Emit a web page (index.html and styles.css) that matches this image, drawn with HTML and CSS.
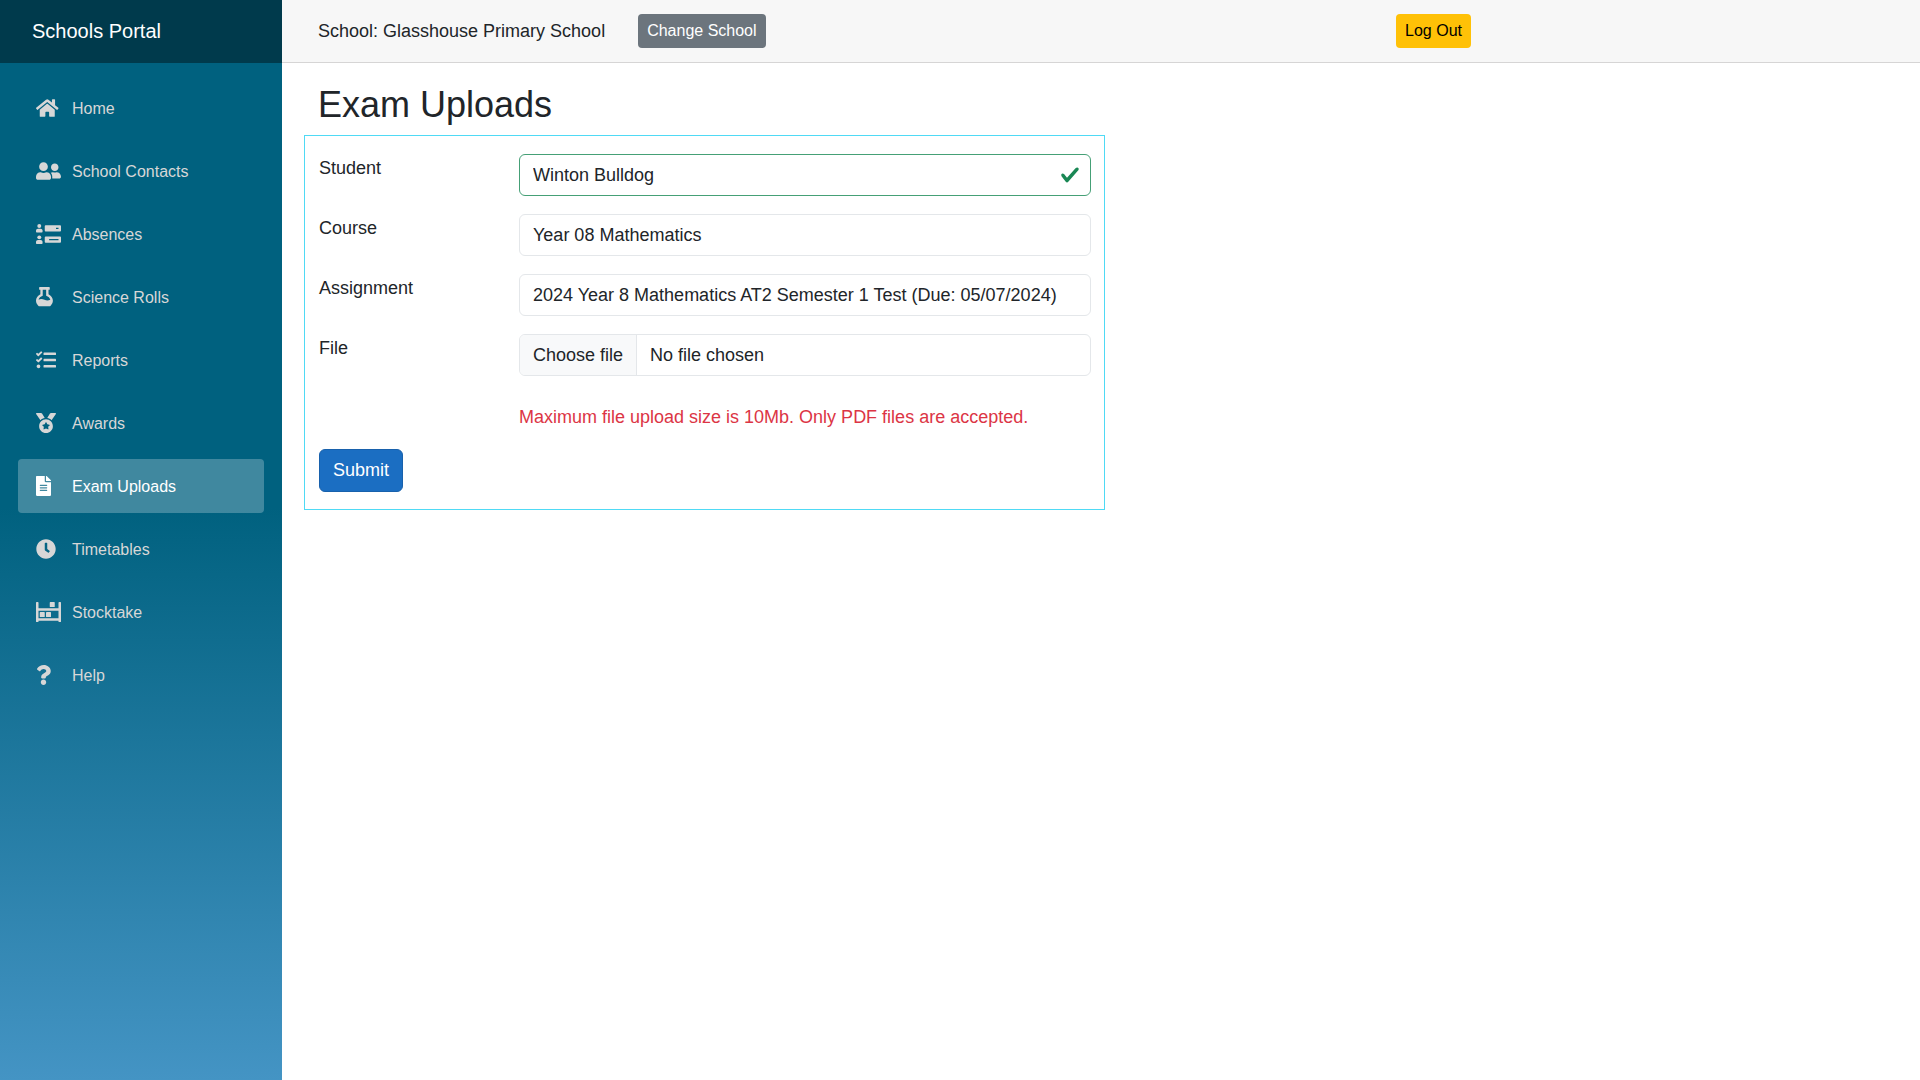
FILE: index.html
```html
<!DOCTYPE html>
<html lang="en-AU">
<head>
<meta charset="utf-8">
<meta name="viewport" content="width=device-width, initial-scale=1">
<title>Exam Uploads</title>
<link rel="stylesheet" href="styles.css">
</head>
<body>
<div class="page">
  <aside class="sidebar">
    <div class="brand"><a href="#">Schools Portal</a></div>
    <nav class="nav">
      <a class="nav-link" href="#"><svg class="icon" preserveAspectRatio="xMinYMid" viewBox="0 0 576 512"><path d="M280.37 148.26L96 300.11V464a16 16 0 0 0 16 16l112.06-.29a16 16 0 0 0 15.92-16V368a16 16 0 0 1 16-16h64a16 16 0 0 1 16 16v95.64a16 16 0 0 0 16 16.05L464 480a16 16 0 0 0 16-16V300L295.67 148.26a12.19 12.19 0 0 0-15.3 0zM571.6 251.47L488 182.56V44.05a12 12 0 0 0-12-12h-56a12 12 0 0 0-12 12v72.61L318.47 43a48 48 0 0 0-61 0L4.34 251.47a12 12 0 0 0-1.6 16.9l25.5 31A12 12 0 0 0 45.15 301l235.22-193.74a12.19 12.19 0 0 1 15.3 0L530.9 301a12 12 0 0 0 16.9-1.6l25.5-31a12 12 0 0 0-1.7-16.93z"/></svg>Home</a>
      <a class="nav-link" href="#"><svg class="icon" preserveAspectRatio="xMinYMid" viewBox="0 0 640 512"><path d="M192 256c61.9 0 112-50.1 112-112S253.9 32 192 32 80 82.1 80 144s50.1 112 112 112zm76.8 32h-8.3c-20.8 10-43.9 16-68.5 16s-47.6-6-68.5-16h-8.3C51.6 288 0 339.6 0 403.2V432c0 26.5 21.5 48 48 48h288c26.5 0 48-21.5 48-48v-28.8c0-63.6-51.6-115.2-115.2-115.2zM480 256c53 0 96-43 96-96s-43-96-96-96-96 43-96 96 43 96 96 96zm48 32h-3.8c-13.9 4.8-28.6 8-44.2 8s-30.3-3.2-44.2-8H432c-20.4 0-39.2 5.9-55.7 15.4 24.4 26.3 39.7 61.2 39.7 99.8v38.4c0 2.2-.5 4.3-.6 6.4H592c26.5 0 48-21.5 48-48 0-61.9-50.1-112-112-112z"/></svg>School Contacts</a>
      <a class="nav-link" href="#"><svg class="icon" preserveAspectRatio="xMinYMid" viewBox="0 0 640 512"><circle cx="84" cy="52" r="50"/><path d="M50 122h68c28 0 50 22 50 50v28c0 12-8 20-20 20H20c-12 0-20-8-20-20v-28c0-28 22-50 50-50z"/><circle cx="84" cy="342" r="50"/><path d="M50 412h68c28 0 50 22 50 50v28c0 12-8 20-20 20H20c-12 0-20-8-20-20v-28c0-28 22-50 50-50z"/><path fill-rule="evenodd" d="M248 32h368a24 24 0 0 1 24 24v112a24 24 0 0 1-24 24H248a24 24 0 0 1-24-24V56a24 24 0 0 1 24-24zm264 64v32h64V96zM248 320h368a24 24 0 0 1 24 24v112a24 24 0 0 1-24 24H248a24 24 0 0 1-24-24V344a24 24 0 0 1 24-24zm88 64v32h240v-32z"/></svg>Absences</a>
      <a class="nav-link" href="#"><svg class="icon" preserveAspectRatio="xMinYMid" viewBox="0 0 448 512"><path fill-rule="evenodd" d="M96 0h240a16 16 0 0 1 16 16v40a16 16 0 0 1-16 16h-16v112c68 34 112 94 112 164 0 50-20 92-52 124-12 14-28 22-46 22H98c-18 0-34-8-46-22C20 440 0 398 0 348c0-70 44-130 112-164V72H96a16 16 0 0 1-16-16V16A16 16 0 0 1 96 0zm76 72v152c-56 20-96 54-106 104 54-30 96-20 150 0s96 22 150-2c-12-48-50-82-106-102V72z"/></svg>Science Rolls</a>
      <a class="nav-link" href="#"><svg class="icon" preserveAspectRatio="xMinYMid" viewBox="0 0 512 512"><path d="M139.61 35.5a12 12 0 0 0-17 0L58.93 98.81l-22.7-22.12a12 12 0 0 0-17 0L3.53 92.41a12 12 0 0 0 0 17l47.59 47.4a12.78 12.78 0 0 0 17.61 0l15.59-15.62L156.52 69a12.09 12.09 0 0 0 .09-17zm0 159.19a12 12 0 0 0-17 0l-63.68 63.72-22.7-22.1a12 12 0 0 0-17 0L3.53 252a12 12 0 0 0 0 17L51 316.5a12.77 12.77 0 0 0 17.6 0l15.7-15.69 72.2-72.22a12 12 0 0 0 .09-16.9zM64 368c-26.49 0-48.59 21.5-48.59 48S37.53 464 64 464a48 48 0 0 0 0-96zm432 16H208a16 16 0 0 0-16 16v32a16 16 0 0 0 16 16h288a16 16 0 0 0 16-16v-32a16 16 0 0 0-16-16zm0-320H208a16 16 0 0 0-16 16v32a16 16 0 0 0 16 16h288a16 16 0 0 0 16-16V80a16 16 0 0 0-16-16zm0 160H208a16 16 0 0 0-16 16v32a16 16 0 0 0 16 16h288a16 16 0 0 0 16-16v-32a16 16 0 0 0-16-16z"/></svg>Reports</a>
      <a class="nav-link" href="#"><svg class="icon" preserveAspectRatio="xMinYMid" viewBox="0 0 512 512"><path d="M223.75 130.75L154.62 15.54A31.997 31.997 0 0 0 127.18 0H16.03C3.08 0-4.5 14.57 2.92 25.18l111.27 158.96c29.72-27.77 67.52-46.83 109.56-53.39zM495.97 0H384.82c-11.24 0-21.66 5.9-27.44 15.54l-69.13 115.21c42.04 6.56 79.84 25.62 109.56 53.38L509.08 25.18C516.5 14.57 508.92 0 495.97 0zM256 160c-97.2 0-176 78.8-176 176s78.8 176 176 176 176-78.8 176-176-78.8-176-176-176zm92.52 157.26l-37.93 36.96 8.97 52.22c1.6 9.36-8.26 16.51-16.65 12.09L256 393.88l-46.9 24.65c-8.4 4.45-18.25-2.74-16.65-12.09l8.97-52.22-37.93-36.96c-6.82-6.64-3.05-18.23 6.35-19.59l52.43-7.64 23.43-47.52c2.11-4.28 6.19-6.39 10.28-6.39 4.11 0 8.22 2.14 10.33 6.39l23.43 47.52 52.43 7.64c9.4 1.36 13.17 12.95 6.35 19.59z"/></svg>Awards</a>
      <a class="nav-link active" href="#" aria-current="page"><svg class="icon" preserveAspectRatio="xMinYMid" viewBox="0 0 384 512"><path d="M224 136V0H24C10.7 0 0 10.7 0 24v464c0 13.3 10.7 24 24 24h336c13.3 0 24-10.7 24-24V160H248c-13.2 0-24-10.8-24-24zm64 236c0 6.6-5.4 12-12 12H108c-6.6 0-12-5.4-12-12v-8c0-6.6 5.4-12 12-12h168c6.6 0 12 5.4 12 12v8zm0-64c0 6.6-5.4 12-12 12H108c-6.6 0-12-5.4-12-12v-8c0-6.6 5.4-12 12-12h168c6.6 0 12 5.4 12 12v8zm0-72v8c0 6.6-5.4 12-12 12H108c-6.6 0-12-5.4-12-12v-8c0-6.6 5.4-12 12-12h168c6.6 0 12 5.4 12 12zm96-114.1v6.1H256V0h6.1c6.4 0 12.5 2.5 17 7l97.9 98c4.5 4.5 7 10.6 7 16.9z"/></svg>Exam Uploads</a>
      <a class="nav-link" href="#"><svg class="icon" preserveAspectRatio="xMinYMid" viewBox="0 0 512 512"><path d="M256,8C119,8,8,119,8,256S119,504,256,504,504,393,504,256,393,8,256,8Zm92.49,313h0l-20,25a16,16,0,0,1-22.49,2.5h0l-67-49.72a40,40,0,0,1-15-31.23V112a16,16,0,0,1,16-16h32a16,16,0,0,1,16,16V256l58,42.5A16,16,0,0,1,348.49,321Z"/></svg>Timetables</a>
      <a class="nav-link" href="#"><svg class="icon" preserveAspectRatio="xMinYMid" viewBox="0 0 640 512"><path d="M16 0h32a16 16 0 0 1 16 16v144h512V16a16 16 0 0 1 16-16h32a16 16 0 0 1 16 16v480a16 16 0 0 1-16 16h-32a16 16 0 0 1-16-16v-16H64v16a16 16 0 0 1-16 16H16a16 16 0 0 1-16-16V16A16 16 0 0 1 16 0zm48 224v192h512V224z" fill-rule="evenodd"/><rect x="352" width="128" height="128" rx="16"/><rect x="96" y="256" width="128" height="128" rx="16"/><rect x="256" y="256" width="128" height="128" rx="16"/></svg>Stocktake</a>
      <a class="nav-link" href="#"><svg class="icon" preserveAspectRatio="xMinYMid" viewBox="0 0 384 512"><path d="M202.021 0C122.202 0 70.503 32.703 29.914 91.026c-7.363 10.58-5.093 25.086 5.178 32.874l43.138 32.709c10.373 7.865 25.132 6.026 33.253-4.148 25.049-31.381 43.63-49.449 82.757-49.449 30.764 0 68.816 19.799 68.816 49.631 0 22.552-18.617 34.134-48.993 51.164-35.423 19.86-82.299 44.576-82.299 106.405V320c0 13.255 10.745 24 24 24h72.471c13.255 0 24-10.745 24-24v-5.773c0-42.86 125.268-44.645 125.268-160.627C377.504 66.256 286.902 0 202.021 0zM192 373.459c-38.196 0-69.271 31.075-69.271 69.271 0 38.195 31.075 69.27 69.271 69.27s69.271-31.075 69.271-69.27-31.075-69.271-69.271-69.271z"/></svg>Help</a>
    </nav>
  </aside>
  <div class="content">
    <header class="topbar">
      <div class="topbar-inner">
        <span class="school">School: Glasshouse Primary School</span>
        <button class="btn btn-small btn-secondary" type="button">Change School</button>
        <button class="btn btn-small btn-warning" type="button">Log Out</button>
      </div>
    </header>
    <main class="main">
      <h1>Exam Uploads</h1>
      <form class="upload-form">
        <div class="row">
          <label for="student">Student</label>
          <div class="field">
            <input class="control valid" id="student" type="text" value="Winton Bulldog">
            <svg class="check" viewBox="0 0 8 8"><path d="M2.3 6.73.6 4.53c-.4-1.04.46-1.4 1.1-.8l1.1 1.4 3.4-3.8c.6-.63 1.6-.27 1.2.7l-4 4.6c-.43.5-.8.4-1.1.1z"/></svg>
          </div>
        </div>
        <div class="row">
          <label for="course">Course</label>
          <input class="control" id="course" type="text" value="Year 08 Mathematics">
        </div>
        <div class="row">
          <label for="assignment">Assignment</label>
          <input class="control" id="assignment" type="text" value="2024 Year 8 Mathematics AT2 Semester 1 Test (Due: 05/07/2024)">
        </div>
        <div class="row">
          <label for="file">File</label>
          <div class="field control file">
            <span class="file-button">Choose file</span>
            <span class="file-name">No file chosen</span>
            <input class="file-input" id="file" type="file" accept="application/pdf">
          </div>
        </div>
        <div class="row">
          <p class="hint">Maximum file upload size is 10Mb. Only PDF files are accepted.</p>
        </div>
        <button class="btn btn-primary" type="submit">Submit</button>
      </form>
    </main>
  </div>
</div>
</body>
</html>
```

FILE: styles.css
```css
*, *::before, *::after {
  box-sizing: border-box;
}

body {
  margin: 0;
  font: 18px/27px "Liberation Sans", Arial, sans-serif;
  color: #212529;
  background: #fff;
}

.page {
  display: flex;
  min-height: 100vh;
}

.sidebar {
  flex: 0 0 282px;
  background: linear-gradient(180deg, #00617f 0%, #00617f 47%, #4494c4 100%);
}

.brand {
  display: flex;
  align-items: center;
  height: 63px;
  padding: 0 32px;
  font-size: 20px;
  background: rgba(0, 0, 0, 0.4);
}

.brand a {
  color: #fff;
  text-decoration: none;
}

.nav {
  display: flex;
  flex-direction: column;
  gap: 9px;
  padding: 18px;
}

.nav-link {
  display: flex;
  align-items: center;
  height: 54px;
  padding: 0 18px;
  border-radius: 4px;
  font-size: 16px;
  color: #d7d7d7;
  text-decoration: none;
}

.nav-link.active {
  color: #fff;
  background: rgba(255, 255, 255, 0.25);
}

.icon {
  width: 36px;
  height: 20px;
  fill: currentColor;
}

.content {
  flex: 1;
  min-width: 0;
}

.topbar {
  height: 63px;
  padding: 0 36px;
  background: #f7f7f7;
  border-bottom: 1px solid #d6d5d5;
}

.topbar-inner {
  display: flex;
  align-items: center;
  gap: 33px;
  max-width: 1153px;
  height: 100%;
}

.btn {
  padding: 7px 13px;
  border: 1px solid transparent;
  border-radius: 6px;
  font: inherit;
  cursor: pointer;
}

.btn-small {
  padding: 4px 8px;
  border-radius: 4px;
  font-size: 16px;
  line-height: 24px;
}

.btn-secondary {
  color: #fff;
  background: #6c757d;
}

.btn-warning {
  margin-left: auto;
  color: #000;
  background: #ffc107;
}

.btn-primary {
  color: #fff;
  background: #1b6ec2;
  border-color: #1861ac;
}

.main {
  padding: 20px 22px;
}

h1 {
  margin: 0 0 9px;
  padding-left: 14px;
  font-size: 36px;
  font-weight: 400;
  line-height: 43px;
}

.upload-form {
  max-width: 801px;
  padding: 18px 13px 17px 14px;
  border: 1px solid #4fdaf5;
}

.row {
  display: grid;
  grid-template-columns: 200px 1fr;
  margin-bottom: 18px;
}

.row label {
  padding-top: 1px;
}

.field {
  position: relative;
}

.control {
  display: block;
  width: 100%;
  height: 42px;
  padding: 0 13px;
  border: 1px solid #e4e7ea;
  border-radius: 6px;
  font: inherit;
  color: inherit;
  background: #fff;
}

.control.valid {
  padding-right: 40px;
  border-color: #45a076;
}

.check {
  position: absolute;
  top: 11px;
  right: 11px;
  width: 20px;
  height: 20px;
  fill: #198754;
}

.file {
  display: flex;
  align-items: stretch;
  padding: 0;
  overflow: hidden;
  line-height: 40px;
}

.file-button {
  padding: 0 13px;
  background: #f8f9fa;
  border-right: 1px solid #e4e7ea;
}

.file-name {
  padding: 0 13px;
}

.file-input {
  position: absolute;
  inset: 0;
  width: 100%;
  opacity: 0;
}

.hint {
  grid-column: 2;
  margin: 10px 0 0;
  color: #dc3545;
}
```
